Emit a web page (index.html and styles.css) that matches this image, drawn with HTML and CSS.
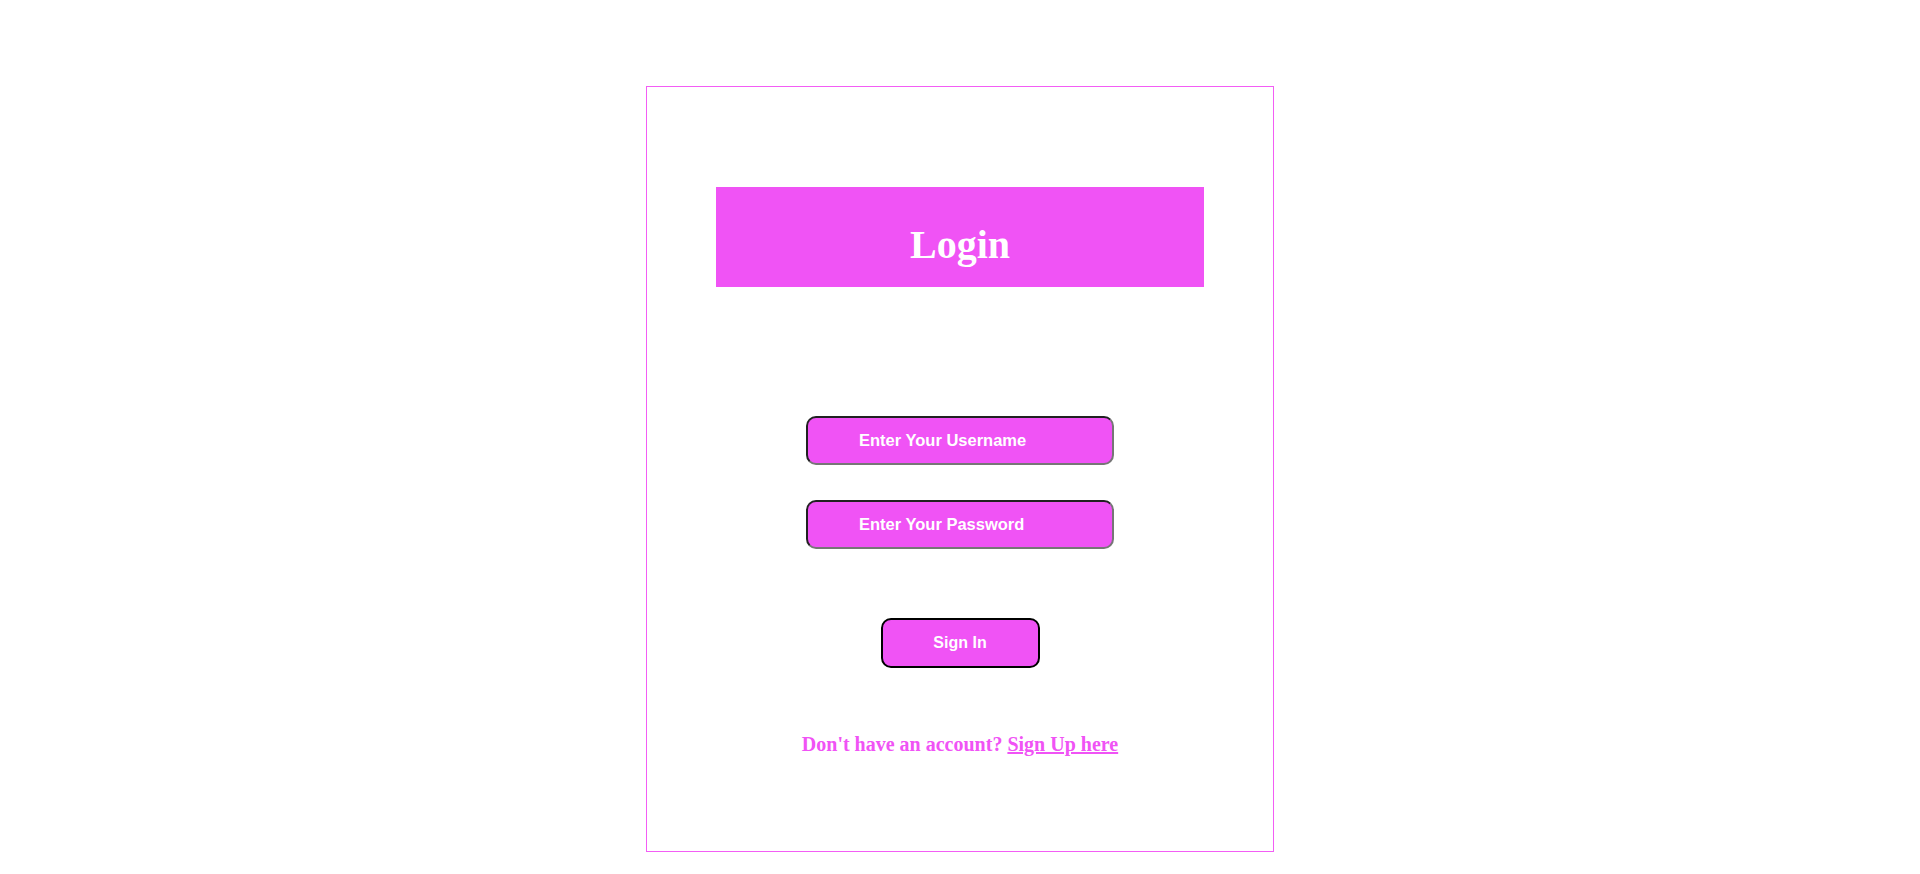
FILE: index.html
```html
<!DOCTYPE html>
<html lang="en">
<head>
<meta charset="UTF-8">
<title>Login</title>
<link rel="stylesheet" href="styles.css">
</head>
<body>
<div class="page">
  <div class="card">
    <div class="header">
      <h1 class="title">Login</h1>
    </div>
    <form class="form">
      <input class="field field-user" type="text" placeholder="Enter Your Username">
      <input class="field field-pass" type="password" placeholder="Enter Your Password">
      <button class="btn" type="button">Sign In</button>
      <p class="signup">Don't have an account? <a class="signup-link" href="#">Sign Up here</a></p>
    </form>
  </div>
</div>
</body>
</html>
```

FILE: styles.css
```css
html, body {
  margin: 0;
  padding: 0;
  background: #ffffff;
}

.page {
  display: flex;
  justify-content: center;
  padding-top: 86px;
}

.card {
  box-sizing: border-box;
  width: 628px;
  height: 766px;
  border: 1px solid #f35df5;
  padding: 100px 69px 0 69px;
  display: flex;
  flex-direction: column;
}

.header {
  box-sizing: border-box;
  height: 100px;
  background: #f053f5;
  padding-top: 36px;
  text-align: center;
}

.title {
  margin: 0;
  font-family: "Liberation Serif", "Times New Roman", serif;
  font-weight: bold;
  font-size: 40px;
  line-height: 44px;
  color: #ffffff;
}

.form {
  display: flex;
  flex-direction: column;
  align-items: center;
  margin: 0;
}

.field {
  box-sizing: border-box;
  width: 308px;
  height: 49px;
  background: #f053f5;
  border: 2px inset #767676;
  border-radius: 10px;
  padding: 0 10px 0 51px;
  font-family: "Liberation Sans", Arial, sans-serif;
  font-weight: bold;
  font-size: 16.5px;
  color: #ffffff;
  outline: none;
}

.field::placeholder {
  color: #ffffff;
  opacity: 1;
}

.field-user {
  margin-top: 129px;
}

.field-pass {
  margin-top: 35px;
}

.btn {
  box-sizing: border-box;
  width: 159px;
  height: 50px;
  margin-top: 69px;
  background: #f053f5;
  border: 2px solid #000000;
  border-radius: 10px;
  font-family: "Liberation Sans", Arial, sans-serif;
  font-weight: bold;
  font-size: 16px;
  color: #ffffff;
  padding: 0;
}

.signup {
  margin: 65px 0 0 0;
  font-family: "Liberation Serif", "Times New Roman", serif;
  font-weight: bold;
  font-size: 20px;
  line-height: 23px;
  color: #f053f5;
}

.signup-link {
  color: #f053f5;
  text-decoration: underline;
}
```
